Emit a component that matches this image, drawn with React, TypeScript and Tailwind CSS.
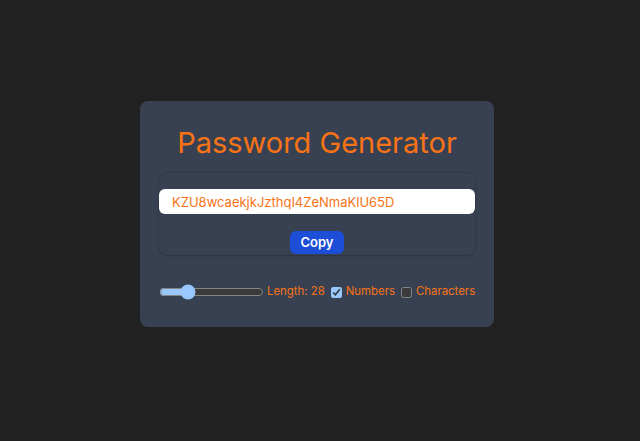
import React, { useState } from "react";

export default function App() {
  const [length, setLength] = useState(28);
  const [numbers, setNumbers] = useState(true);
  const [chars, setChars] = useState(false);
  return (
    <div
      className="min-h-[441px] w-full bg-[#212121] pt-[101px] pl-[140px] [color-scheme:dark]"
      style={{ fontFamily: "Inter, 'Noto Sans', sans-serif" }}
    >
      <div className="w-[354px] h-[226px] rounded-lg bg-[#374151] px-[19px] pt-[24px] flex flex-col">
        <h1 className="text-[29px] leading-[36px] text-center text-[#f97316]">Password Generator</h1>
        <div className="mt-[12px] rounded-lg shadow-[0_0_0_1px_rgba(0,0,0,0.07),0_1px_3px_rgba(0,0,0,0.12)] pt-[16px] flex flex-col items-center h-[82px]">
          <input
            readOnly
            value="KZU8wcaekjkJzthqI4ZeNmaKlU65D"
            className="w-full h-[25px] rounded-md bg-white px-[13px] text-[13px] text-[#f97316] outline-none [color-scheme:light]"
          />
          <button className="mt-[17px] h-[23px] w-[54px] rounded-md bg-[#1d4ed8] text-white text-[13px] font-semibold leading-none">
            Copy
          </button>
        </div>
        <div className="mt-[27px] flex items-center whitespace-nowrap text-[11.4px] text-[#f97316] h-[20px]">
          <input
            type="range"
            min={6}
            max={100}
            value={length}
            onChange={(e) => setLength(Number(e.target.value))}
            className="w-[105px] m-0 cursor-pointer"
          />
          <label className="ml-[3px]">Length: {length}</label>
          <input
            type="checkbox"
            checked={numbers}
            onChange={() => setNumbers(!numbers)}
            className="ml-[6px] m-0 w-[11px] h-[11px]"
          />
          <label className="ml-[4px]">Numbers</label>
          <input
            type="checkbox"
            checked={chars}
            onChange={() => setChars(!chars)}
            className="ml-[6px] m-0 w-[11px] h-[11px]"
          />
          <label className="ml-[4px]">Characters</label>
        </div>
      </div>
    </div>
  );
}
